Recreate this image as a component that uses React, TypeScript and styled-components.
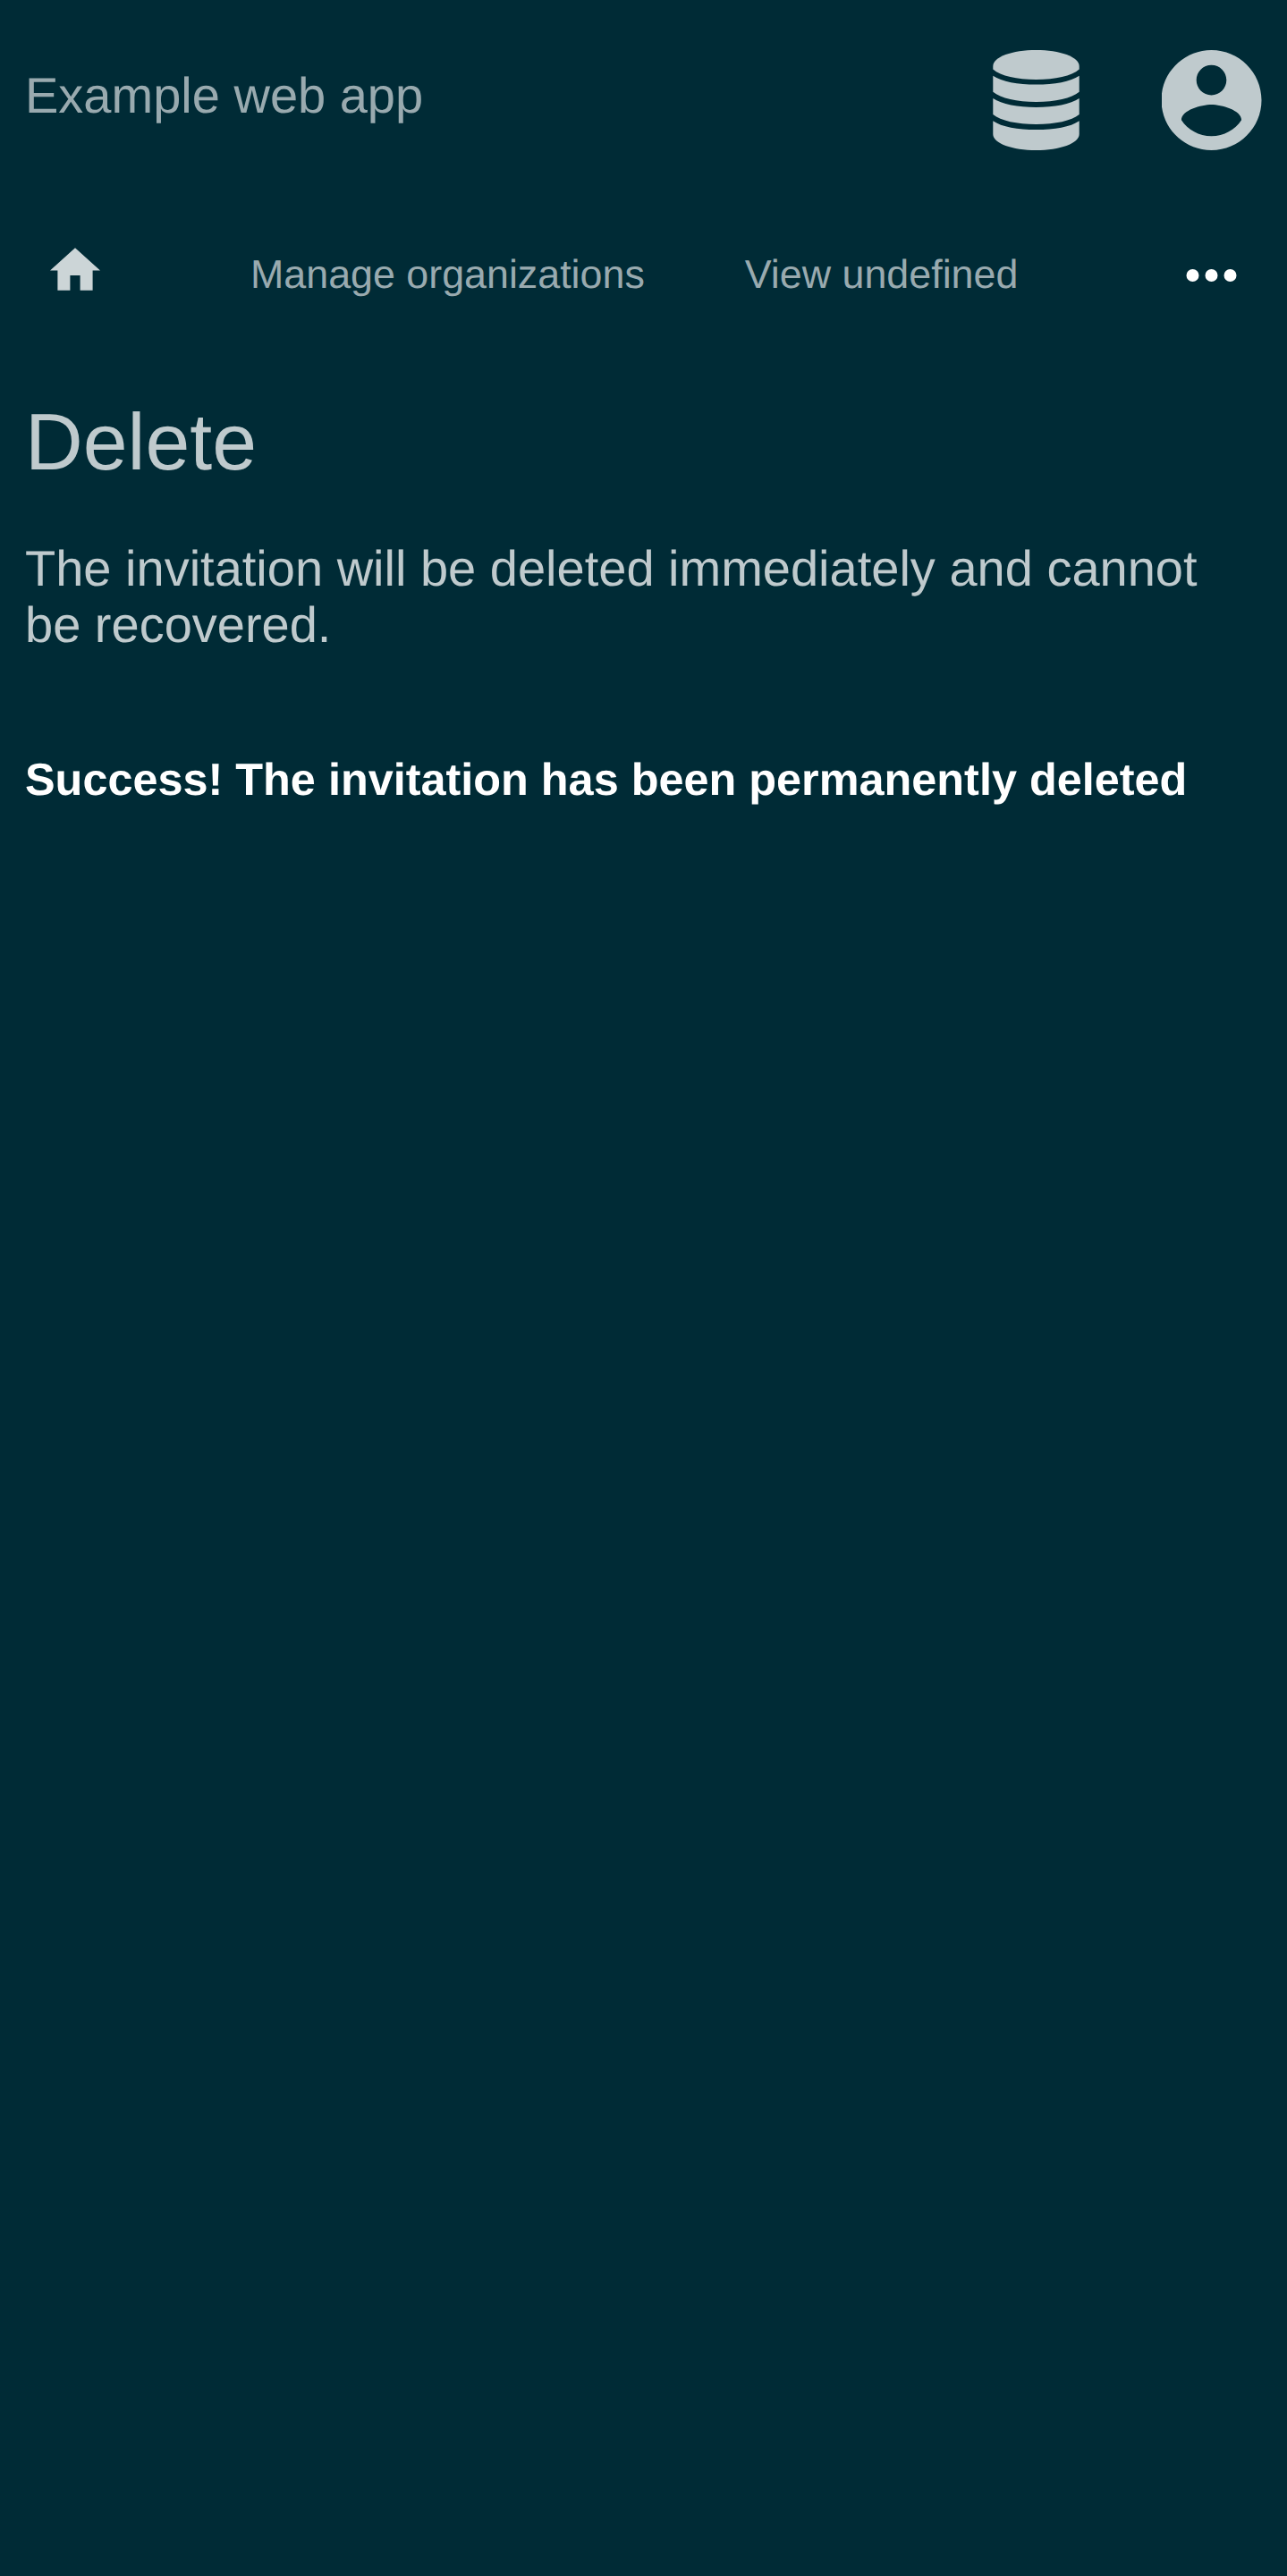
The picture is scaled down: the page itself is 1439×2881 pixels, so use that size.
import React from "react";
import styled, { createGlobalStyle } from "styled-components";

const GlobalStyle = createGlobalStyle`
  html, body { margin: 0; background: #002b36; }
  body {
    font-family: "Liberation Sans", Arial, sans-serif;
    text-rendering: geometricPrecision;
  }
`;

const Page = styled.div`
  min-height: 2881px;
  box-sizing: border-box;
  background: #002b36;
`;

const Header = styled.header`
  display: flex;
  align-items: flex-start;
  height: 224px;
  box-sizing: border-box;
  padding: 56px 28px 0;
`;

const AppTitle = styled.a`
  flex: 1;
  margin-top: 19px;
  font-size: 56px;
  line-height: 63px;
  color: #99aaaf;
`;

const HeaderButton = styled.button<{ $gap?: number }>`
  display: flex;
  padding: 0;
  border: 0;
  margin-right: ${(p) => p.$gap ?? 0}px;
  background: none;
  color: #bfcacd;
`;

const Nav = styled.nav`
  display: flex;
  align-items: flex-start;
  height: 196px;
  box-sizing: border-box;
  padding: 53px 56px 0;
`;

const HomeLink = styled.a`
  display: flex;
  width: 224px;
  color: #ccd5d7;
`;

const NavLink = styled.a`
  margin: 5px 112px 0 0;
  font-size: 44.8px;
  line-height: 51px;
  white-space: nowrap;
  color: #99aaaf;
`;

const MoreButton = styled.button`
  display: flex;
  margin: 24px 0 0 auto;
  padding: 0;
  border: 0;
  background: none;
  color: #fff;
`;

const Main = styled.main`
  padding: 24px 28px;
`;

const Title = styled.h1`
  margin: 0;
  font-size: 89.6px;
  line-height: 100px;
  font-weight: 400;
  color: #bfcacd;
`;

const Text = styled.p`
  margin: 60px 0 0;
  font-size: 56px;
  line-height: 63px;
  color: #bfcacd;
`;

const Message = styled.p`
  margin: 113px 0 0;
  font-size: 50.4px;
  line-height: 57px;
  font-weight: 700;
  color: #fff;
`;

const DatabaseIcon = () => (
  <svg width="97" height="112" viewBox="0 0 97 112" fill="currentColor">
    <path d="M0.300 18C0.300 7.500 22 0 48.500 0S96.700 7.500 96.700 18V21.500C88 29 70 33 48.500 33S9 29 0.300 21.500Z" />
    <path d="M0.300 28.800C10 35.500 28 38.600 48.500 38.600S87 35.500 96.700 28.800V46.800C88 54 70 58 48.500 58S9 54 0.300 46.800Z" />
    <path d="M0.300 54C10 60.700 28 63.900 48.500 63.900S87 60.700 96.700 54V72C88 79 70 83 48.500 83S9 79 0.300 72Z" />
    <path d="M0.300 79.200C10 86 28 89 48.500 89S87 86 96.700 79.200V94C96.700 104.500 75 112 48.500 112S0.300 104.500 0.300 94Z" />
  </svg>
);

const AccountIcon = () => (
  <svg width="112" height="112" viewBox="2.089 2 20 20" fill="currentColor">
    <path d="M12 2C6.480 2 2 6.480 2 12s4.480 10 10 10 10-4.480 10-10S17.520 2 12 2zm0 3c1.660 0 3 1.340 3 3s-1.340 3-3 3-3-1.340-3-3 1.340-3 3-3zm0 14.200c-2.500 0-4.710-1.280-6-3.220.030-1.990 4-3.080 6-3.080 1.990 0 5.970 1.090 6 3.080-1.290 1.940-3.500 3.220-6 3.220z" />
  </svg>
);

const HomeIcon = () => (
  <svg width="56" height="48" viewBox="2 2.930 20 17.140" fill="currentColor">
    <path d="M10 20v-6h4v6h5v-8h3L12 3 2 12h3v8z" />
  </svg>
);

const MoreIcon = () => (
  <svg width="57" height="14" viewBox="0 0 57 14" fill="currentColor">
    <circle cx="7.500" cy="7" r="7" />
    <circle cx="28.500" cy="7" r="7" />
    <circle cx="49.500" cy="7" r="7" />
  </svg>
);

export default function App() {
  return (
    <Page>
      <GlobalStyle />
      <Header>
        <AppTitle>Example web app</AppTitle>
        <HeaderButton $gap={92} aria-label="Organizations">
          <DatabaseIcon />
        </HeaderButton>
        <HeaderButton aria-label="Account">
          <AccountIcon />
        </HeaderButton>
      </Header>
      <Nav>
        <HomeLink aria-label="Home">
          <HomeIcon />
        </HomeLink>
        <NavLink>Manage organizations</NavLink>
        <NavLink>View undefined</NavLink>
        <MoreButton aria-label="More">
          <MoreIcon />
        </MoreButton>
      </Nav>
      <Main>
        <Title>Delete</Title>
        <Text>The invitation will be deleted immediately and cannot be recovered.</Text>
        <Message>Success! The invitation has been permanently deleted</Message>
      </Main>
    </Page>
  );
}
